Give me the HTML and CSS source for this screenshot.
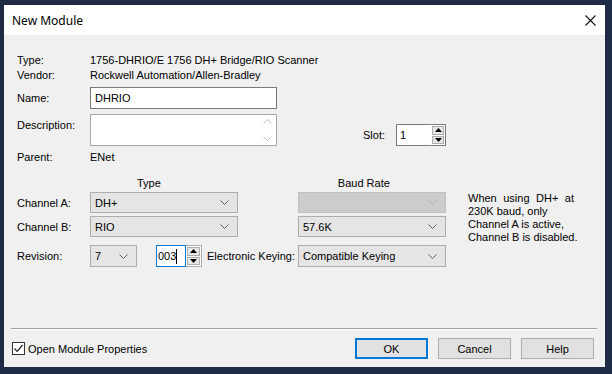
FILE: index.html
```html
<!DOCTYPE html>
<html>
<head>
<meta charset="utf-8">
<link rel="stylesheet" href="styles.css">
</head>
<body>
<div class="screen">
  <div class="dialog">
    <div class="titlebar">
      <span class="title">New Module</span>
      <svg class="close" width="11" height="11" viewBox="0 0 11 11"><path d="M0.5 0.5L10.5 10.5M10.5 0.5L0.5 10.5" stroke="#111" stroke-width="1.1" fill="none"/></svg>
    </div>
    <div class="content">
      <div class="row info"><span class="label">Type:</span><span>1756-DHRIO/E 1756 DH+ Bridge/RIO Scanner</span></div>
      <div class="row info r-vendor"><span class="label">Vendor:</span><span>Rockwell Automation/Allen-Bradley</span></div>
      <div class="row r-name"><span class="label">Name:</span><div class="textbox name">DHRIO</div></div>
      <div class="row r-desc">
        <span class="label desc-label">Description:</span>
        <div class="textbox desc">
          <div class="vscroll">
            <svg width="9" height="5" viewBox="0 0 9 5"><path d="M0.5 4.5L4.5 0.5L8.5 4.5" stroke="#c4c4c4" fill="none"/></svg>
            <svg width="9" height="5" viewBox="0 0 9 5"><path d="M0.5 0.5L4.5 4.5L8.5 0.5" stroke="#c4c4c4" fill="none"/></svg>
          </div>
        </div>
        <div class="slot">
          <span class="slot-label">Slot:</span>
          <div class="spinbox slotbox">
            <div class="spin-input">1</div>
            <div class="spin-btns">
              <div class="spin-btn"><svg width="7" height="4" viewBox="0 0 7 4"><path d="M0 4L3.5 0L7 4Z" fill="#000"/></svg></div>
              <div class="spin-btn"><svg width="7" height="4" viewBox="0 0 7 4"><path d="M0 0L3.5 4L7 0Z" fill="#000"/></svg></div>
            </div>
          </div>
        </div>
      </div>
      <div class="row info r-parent"><span class="label">Parent:</span><span>ENet</span></div>
      <div class="row info r-head"><span class="head-type">Type</span><span class="head-baud">Baud Rate</span></div>
      <div class="channels">
        <div class="chan-rows">
          <div class="row r-chan">
            <span class="label">Channel A:</span>
            <div class="combo wide"><span>DH+</span><svg class="chev" width="9" height="5" viewBox="0 0 9 5"><path d="M0.5 0.5L4.5 4.5L8.5 0.5" stroke="#606060" fill="none"/></svg></div>
            <div class="combo wide disabled baud"><span></span><svg class="chev" width="9" height="5" viewBox="0 0 9 5"><path d="M0.5 0.5L4.5 4.5L8.5 0.5" stroke="#b0b0b0" fill="none"/></svg></div>
          </div>
          <div class="row r-chan r-chanb">
            <span class="label">Channel B:</span>
            <div class="combo wide"><span>RIO</span><svg class="chev" width="9" height="5" viewBox="0 0 9 5"><path d="M0.5 0.5L4.5 4.5L8.5 0.5" stroke="#606060" fill="none"/></svg></div>
            <div class="combo wide baud"><span>57.6K</span><svg class="chev" width="9" height="5" viewBox="0 0 9 5"><path d="M0.5 0.5L4.5 4.5L8.5 0.5" stroke="#606060" fill="none"/></svg></div>
          </div>
          <div class="row r-rev">
            <span class="label">Revision:</span>
            <div class="combo small"><span>7</span><svg class="chev" width="9" height="5" viewBox="0 0 9 5"><path d="M0.5 0.5L4.5 4.5L8.5 0.5" stroke="#606060" fill="none"/></svg></div>
            <div class="spinbox revbox">
              <div class="spin-input focused">003<span class="caret"></span></div>
              <div class="spin-btns">
                <div class="spin-btn"><svg width="7" height="4" viewBox="0 0 7 4"><path d="M0 4L3.5 0L7 4Z" fill="#000"/></svg></div>
                <div class="spin-btn"><svg width="7" height="4" viewBox="0 0 7 4"><path d="M0 0L3.5 4L7 0Z" fill="#000"/></svg></div>
              </div>
            </div>
            <span class="ek-label">Electronic Keying:</span>
            <div class="combo wide"><span>Compatible Keying</span><svg class="chev" width="9" height="5" viewBox="0 0 9 5"><path d="M0.5 0.5L4.5 4.5L8.5 0.5" stroke="#606060" fill="none"/></svg></div>
          </div>
        </div>
        <div class="note">
          <div class="just">When using DH+ at</div>
          <div>230K baud, only</div>
          <div>Channel A is active,</div>
          <div>Channel B is disabled.</div>
        </div>
      </div>
    </div>
    <div class="separator"></div>
    <div class="footer">
      <label class="check">
        <span class="checkbox"><svg width="11" height="11" viewBox="0 0 11 11"><path d="M1.5 5.5L4.2 8.3L9.6 2" stroke="#222" stroke-width="1.2" fill="none"/></svg></span>
        <span>Open Module Properties</span>
      </label>
      <div class="buttons">
        <div class="btn default">OK</div>
        <div class="btn">Cancel</div>
        <div class="btn">Help</div>
      </div>
    </div>
  </div>
</div>
</body>
</html>
```

FILE: styles.css
```css
* { box-sizing: border-box; }
html, body { margin: 0; }
body {
  background: #1f2b45;
  font-family: "Liberation Sans", Arial, sans-serif;
  font-size: 11px;
  color: #000;
  width: 612px;
  height: 374px;
  overflow: hidden;
}
.screen { padding: 5px 0 0 4px; }
.dialog {
  width: 601px;
  height: 362px;
  background: #f0f0f0;
  display: flex;
  flex-direction: column;
}
.titlebar {
  height: 30px;
  flex: none;
  background: #fff;
  display: flex;
  align-items: center;
  justify-content: space-between;
  padding: 0 9px 0 8px;
  font-family: "Noto Sans", sans-serif;
  font-size: 12px;
  color: #000;
}
.close { margin-top: 1px; }
.content {
  flex: 1;
  padding: 19px 0 0 13px;
  display: flex;
  flex-direction: column;
}
.row { display: flex; align-items: center; }
.info { height: 13px; line-height: 13px; }
.label { width: 73px; flex: none; }
.r-vendor { margin-top: 2px; }
.r-name { margin-top: 5px; }
.textbox {
  background: #fff;
  border: 1px solid #7a7a7a;
  width: 187px;
}
.textbox.name { height: 22px; padding: 3px 0 0 4px; line-height: 14px; }
.r-desc { margin-top: 5px; align-items: flex-start; }
.desc-label { padding-top: 5px; }
.textbox.desc { height: 32px; border-color: #a8a8a8; display: flex; justify-content: flex-end; }
.vscroll {
  width: 17px;
  display: flex;
  flex-direction: column;
  justify-content: space-between;
  align-items: center;
  padding: 4px 0 4px 0;
}
.slot { display: flex; align-items: center; margin: 10px 0 0 86px; }
.slot-label { width: 33px; }
.spinbox { display: flex; height: 22px; }
.spin-input {
  background: #fff;
  border: 1px solid #7a7a7a;
  border-right: none;
  padding: 3px 0 0 3px;
  line-height: 14px;
}
.slotbox .spin-input { width: 34px; }
.spin-btns {
  width: 16px;
  display: flex;
  flex-direction: column;
  background: #fff;
  border: 1px solid #7a7a7a;
  border-left: 1px solid #fff;
  padding: 1px;
  gap: 1px;
}
.spin-btn {
  flex: 1;
  background: #e6e6e6;
  border: 1px solid #adadad;
  display: flex;
  align-items: center;
  justify-content: center;
}
.r-parent { margin-top: 5px; }
.r-head { margin-top: 13px; }
.head-type { margin-left: 120px; }
.head-baud { margin-left: 177px; }
.channels { display: flex; margin-top: 2px; }
.chan-rows { display: flex; flex-direction: column; }
.combo {
  height: 21px;
  background: #e5e5e5;
  border: 1px solid #adadad;
  display: flex;
  align-items: center;
  justify-content: space-between;
  padding: 0 8px 0 4px;
}
.combo.wide { width: 148px; }
.combo.small { width: 47px; }
.combo.baud { margin-left: 60px; }
.combo.disabled { background: #cccccc; border-color: #c0c0c0; }
.r-chanb { margin-top: 3px; }
.r-rev { margin-top: 8px; }
.r-rev .combo { height: 22px; }
.revbox { margin-left: 19px; }
.revbox .spin-input { width: 30px; border: 1px solid #0078d7; padding-left: 1px; display: flex; }
.revbox .spin-btns { border-color: #adadad; border-left: none; }
.caret { width: 1px; height: 15px; background: #000; margin-left: 0; }
.ek-label { margin-left: 5px; width: 91px; }
.note {
  margin-left: 22px;
  width: 110px;
  line-height: 13px;
  white-space: nowrap;
}
.just { text-align: justify; text-align-last: justify; width: 106px; white-space: normal; }
.separator {
  margin: 60px 8px 0 7px;
  height: 2px;
  border-top: 1px solid #a0a0a0;
  border-bottom: 1px solid #fff;
  flex: none;
}
.footer {
  display: flex;
  align-items: center;
  justify-content: space-between;
  padding: 0 11px 0 8px;
  height: 37px;
  flex: none;
}
.check { display: flex; align-items: center; gap: 3px; }
.checkbox {
  width: 13px;
  height: 13px;
  border: 1px solid #333;
  background: #fff;
  display: flex;
  align-items: center;
  justify-content: center;
}
.buttons { display: flex; gap: 10px; }
.btn {
  width: 73px;
  height: 21px;
  background: #e1e1e1;
  border: 1px solid #adadad;
  display: flex;
  align-items: center;
  justify-content: center;
}
.btn.default { border: 2px solid #0078d7; }
```
